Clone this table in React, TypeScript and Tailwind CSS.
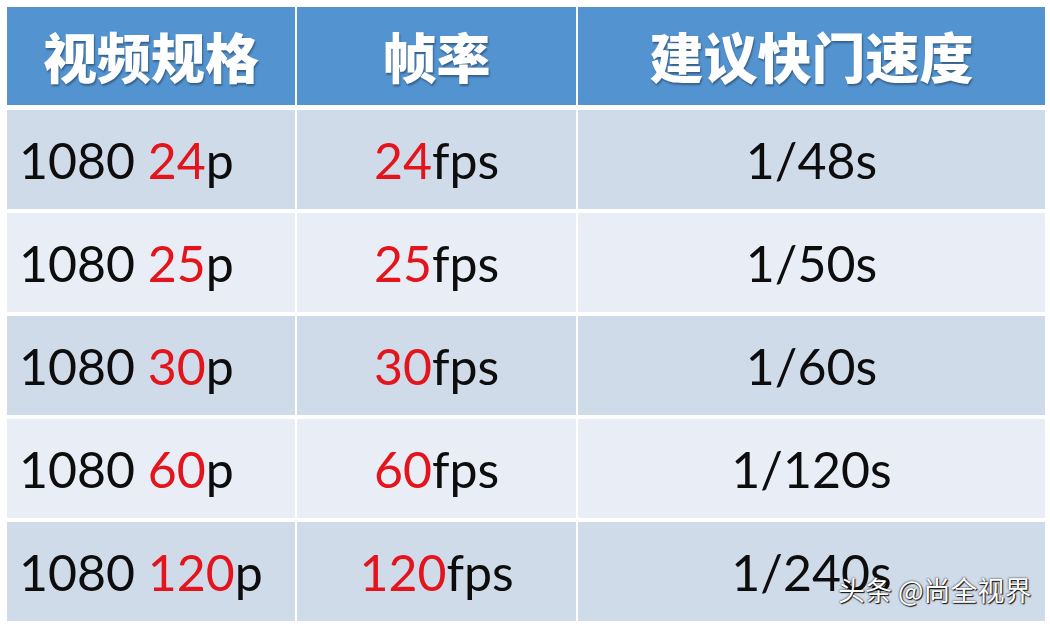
import React from 'react';

const rows = [
  { spec: '24', fps: '24', shutter: '1/48s' },
  { spec: '25', fps: '25', shutter: '1/50s' },
  { spec: '30', fps: '30', shutter: '1/60s' },
  { spec: '60', fps: '60', shutter: '1/120s' },
  { spec: '120', fps: '120', shutter: '1/240s' },
];

const cjk = { fontFamily: '"Noto Sans CJK SC", "Noto Sans", sans-serif' };
const latin = { fontFamily: 'Lato, "Noto Sans", sans-serif' };

export default function App() {
  return (
    <div className="relative w-[1050px] h-[626px] bg-white overflow-hidden">
      <div className="absolute left-[7px] top-[7px] w-[1038px] grid grid-cols-[288px_279px_1fr] gap-x-[2px]">
        {/* header */}
        {['视频规格', '帧率', '建议快门速度'].map((h) => (
          <div
            key={h}
            className="h-[98px] bg-[#5393d0] flex items-center justify-center text-white font-black text-[54px] leading-none [text-shadow:1px_2px_2px_rgba(0,0,0,0.35)]"
            style={cjk}
          >
            {h}
          </div>
        ))}
      </div>

      <div className="absolute left-[7px] top-[110px] w-[1038px] flex flex-col gap-[4px]" style={latin}>
        {rows.map((r, i) => {
          const bg = i % 2 === 0 ? 'bg-[#d0dbea]' : 'bg-[#e9edf5]';
          return (
            <div key={r.spec} className="grid grid-cols-[288px_279px_1fr] gap-x-[2px] h-[99px]">
              <div className={`${bg} flex items-center pl-[12px] text-[50px] text-[#0d0d0d] leading-none`}>
                1080&nbsp;<span className="text-[#e4141c]">{r.spec}</span>p
              </div>
              <div className={`${bg} flex items-center justify-center text-[50px] text-[#0d0d0d] leading-none`}>
                <span className="text-[#e4141c]">{r.fps}</span>fps
              </div>
              <div className={`${bg} flex items-center justify-center text-[50px] text-[#0d0d0d] leading-none`}>
                {r.shutter}
              </div>
            </div>
          );
        })}
      </div>

      {/* watermark */}
      <div
        className="absolute left-[838px] top-[576px] text-white text-[27px] leading-none [text-shadow:0_0_2px_rgba(0,0,0,1),1px_1px_1px_rgba(0,0,0,0.9)]"
        style={cjk}
      >
        头条 @尚全视界
      </div>
    </div>
  );
}
